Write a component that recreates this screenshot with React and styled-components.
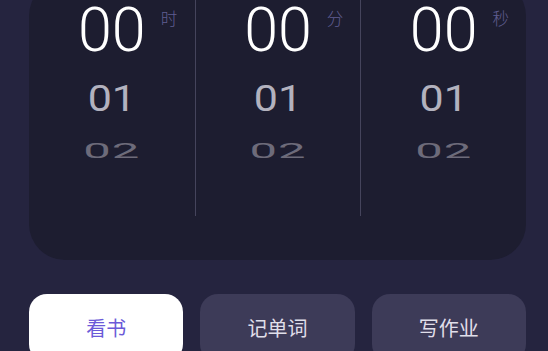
import React from "react";
import styled, { createGlobalStyle } from "styled-components";

const Global = createGlobalStyle`
  html, body { margin: 0; padding: 0; background: #25243f; overflow: hidden; }
  body { font-family: Roboto, "Noto Sans CJK SC", sans-serif; }
`;

const Page = styled.div`
  width: 548px;
  height: 351px;
  padding: 0 22px 0 29px;
  box-sizing: border-box;
  background: #25243f;
  overflow: hidden;
`;

const Card = styled.div`
  margin-top: -20px;
  background: #1d1d30;
  border-radius: 36px;
  padding-bottom: 44px;
  display: grid;
  grid-template-columns: repeat(3, 1fr);
`;

const Column = styled.div`
  display: flex;
  flex-direction: column;
  align-items: center;
  padding-bottom: 32px;
  border-left: ${(p) => (p.$divider ? "1.5px solid #45445c" : "none")};
`;

const Row = styled.div`
  height: ${(p) => p.$h}px;
  display: flex;
  align-items: center;
  justify-content: center;
`;

const Main = styled.div`
  position: relative;
  font-family: Roboto, sans-serif;
  font-size: 61px;
  line-height: 0.9;
  color: #ffffff;
  font-weight: 300;
`;

const Unit = styled.span`
  position: absolute;
  left: 100%;
  top: 7px;
  margin-left: 15px;
  font-family: "Noto Sans CJK SC", sans-serif;
  font-size: 16.5px;
  line-height: 1;
  color: #605d92;
  white-space: nowrap;
`;

const Next = styled.div`
  font-family: Roboto, sans-serif;
  font-size: 43px;
  line-height: 1;
  color: #b3b2be;
  transform: scaleY(0.88);
`;

const Far = styled.div`
  font-family: Roboto, sans-serif;
  font-size: 49px;
  line-height: 1;
  color: #6d6b7a;
  letter-spacing: 1px;
  transform: scaleY(0.43);
`;

const Tabs = styled.div`
  margin-top: 34px;
  display: flex;
  gap: 17px;
`;

const Tab = styled.button`
  flex: 1;
  height: 68px;
  border: none;
  border-radius: 18px;
  background: ${(p) => (p.$active ? "#ffffff" : "#3d3b58")};
  color: ${(p) => (p.$active ? "#6b5ad8" : "#e0dfea")};
  font-family: "Noto Sans CJK SC", sans-serif;
  font-size: 20px;
  padding: 0 0 2px;
  display: flex;
  align-items: center;
  justify-content: center;
`;

const cols = [{ unit: "时" }, { unit: "分" }, { unit: "秒" }];

export default function App() {
  return (
    <Page>
      <Global />
      <Card>
        {cols.map((c, i) => (
          <Column key={c.unit} $divider={i > 0}>
            <Row $h={100}>
              <Main>
                00
                <Unit>{c.unit}</Unit>
              </Main>
            </Row>
            <Row $h={36}>
              <Next>01</Next>
            </Row>
            <Row $h={68}>
              <Far>02</Far>
            </Row>
          </Column>
        ))}
      </Card>
      <Tabs>
        <Tab $active>看书</Tab>
        <Tab>记单词</Tab>
        <Tab>写作业</Tab>
      </Tabs>
    </Page>
  );
}
